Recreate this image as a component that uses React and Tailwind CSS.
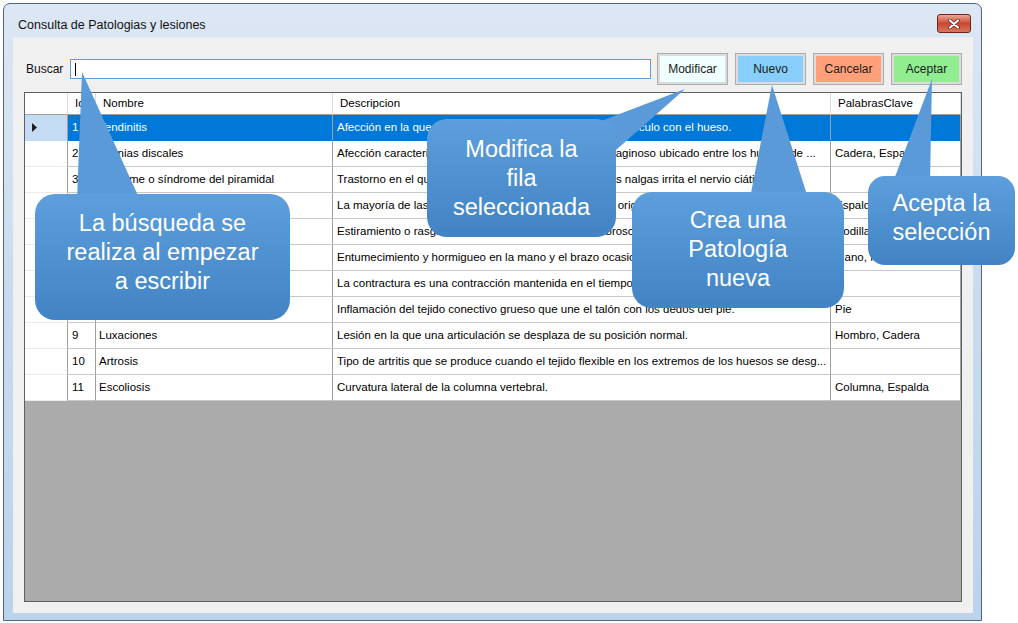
import React from 'react';

const ROWS = [
  { id: 1, name: 'Tendinitis', desc: 'Afección en la que se inflama un tendón, el que une el músculo con el hueso.', kw: '' },
  { id: 2, name: 'Hernias discales', desc: 'Afección caracterizada por la protrusión del disco cartilaginoso ubicado entre los huesos de ...', kw: 'Cadera, Espalda' },
  { id: 3, name: 'Piriforme o síndrome del piramidal', desc: 'Trastorno en el que el músculo piramidal ubicado en las nalgas irrita el nervio ciático.', kw: '' },
  { id: 4, name: 'Lumbalgia', desc: 'La mayoría de las dolencias de espalda baja tienen su origen mecánico.', kw: 'Espalda' },
  { id: 5, name: 'Esguince', desc: 'Estiramiento o rasgadura de un ligamento, el tejido fibroso que une los huesos.', kw: 'Rodilla, Tobillo' },
  { id: 6, name: 'Síndrome del túnel carpiano', desc: 'Entumecimiento y hormigueo en la mano y el brazo ocasionado por un nervio.', kw: 'Mano, Muñeca' },
  { id: 7, name: 'Contractura', desc: 'La contractura es una contracción mantenida en el tiempo de un músculo.', kw: '' },
  { id: 8, name: 'Fascitis plantar', desc: 'Inflamación del tejido conectivo grueso que une el talón con los dedos del pie.', kw: 'Pie' },
  { id: 9, name: 'Luxaciones', desc: 'Lesión en la que una articulación se desplaza de su posición normal.', kw: 'Hombro, Cadera' },
  { id: 10, name: 'Artrosis', desc: 'Tipo de artritis que se produce cuando el tejido flexible en los extremos de los huesos se desg...', kw: '' },
  { id: 11, name: 'Escoliosis', desc: 'Curvatura lateral de la columna vertebral.', kw: 'Columna, Espalda' },
];

function WinButton({ label, fill }) {
  return (
    <div className="w-[71px] h-[32px] border border-[#acacac] bg-[#dcdcdc] p-[2px] flex">
      <div className={`flex-1 flex items-center justify-center text-[12px] text-[#1b1b1b] ${fill}`}>{label}</div>
    </div>
  );
}

function Row({ r, sel }) {
  const cell = sel
    ? 'bg-[#0078d7] text-white border-r border-b border-r-[#a0a0a0] border-b-[#0078d7]'
    : 'bg-white text-black border-r border-b border-r-[#a0a0a0] border-b-[#c8c8c8]';
  return (
    <div className="flex h-[26px] text-[11.5px] leading-none">
      <div className={sel
        ? 'w-[43px] shrink-0 bg-[#c4dcf3] border-r border-b border-r-[#a0a0a0] border-b-[#c4dcf3] flex items-center pl-[7px]'
        : 'w-[43px] shrink-0 bg-white border-r border-b border-r-[#a0a0a0] border-b-[#ececec]'}>
        {sel && (
          <svg width="5" height="9" viewBox="0 0 5 9"><polygon points="0,0 5,4.5 0,9" fill="#1e1e1e" /></svg>
        )}
      </div>
      <div className={`w-[28px] shrink-0 pl-[4px] flex items-center overflow-hidden whitespace-nowrap ${cell}`}>{r.id}</div>
      <div className={`w-[237px] shrink-0 pl-[3px] flex items-center overflow-hidden whitespace-nowrap ${cell}`}>{r.name}</div>
      <div className={`w-[498px] shrink-0 pl-[4px] flex items-center overflow-hidden whitespace-nowrap ${cell}`}>{r.desc}</div>
      <div className={`w-[130px] shrink-0 pl-[4px] flex items-center overflow-hidden whitespace-nowrap ${cell}`}>{r.kw}</div>
    </div>
  );
}

function Callouts() {
  const boxes = [
    { x: 35, y: 194, w: 255, h: 126, r: 20, pb: 'pb-[10px]', tri: '82,72 77,200 140,200', lines: ['La búsqueda se', 'realiza al empezar', 'a escribir'] },
    { x: 427, y: 119, w: 189, h: 118, r: 20, pb: 'pb-[0px]', tri: '685,89 588,126 616,150', lines: ['Modifica la', 'fila', 'seleccionada'] },
    { x: 632, y: 192, w: 212, h: 116, r: 20, pb: 'pb-[2px]', tri: '772,85 750,198 808,198', lines: ['Crea una', 'Patología', 'nueva'] },
    { x: 868, y: 176, w: 147, h: 89, r: 17, pb: 'pb-[6px]', tri: '932,79 893,182 930,182', lines: ['Acepta la', 'selección'] },
  ];
  return (
    <div className="absolute inset-0 pointer-events-none">
      <svg width="1018" height="623" className="absolute left-0 top-0">
        <defs>
          <linearGradient id="cg" x1="0" y1="0" x2="0" y2="1">
            <stop offset="0" stopColor="#5d9edc" />
            <stop offset="1" stopColor="#4283c4" />
          </linearGradient>
        </defs>
        {boxes.map((b, i) => (
          <polygon key={'t' + i} points={b.tri} fill="#5a9ad9" />
        ))}
        {boxes.map((b, i) => (
          <rect key={'r' + i} x={b.x} y={b.y} width={b.w} height={b.h} rx={b.r} fill="url(#cg)" />
        ))}
      </svg>
      {boxes.map((b, i) => (
        <div key={'x' + i} className={`absolute flex flex-col items-center justify-center text-white text-[23.5px] leading-[29px] text-center whitespace-nowrap ${b.pb}`}
          style={{ left: b.x, top: b.y, width: b.w, height: b.h }}>
          {b.lines.map((l) => <div key={l}>{l}</div>)}
        </div>
      ))}
    </div>
  );
}

export default function App() {
  return (
    <div className="relative w-[1018px] h-[623px] bg-white overflow-hidden font-['Liberation_Sans',Arial,sans-serif]">
      <div className="pl-[3px] pt-[3px]">
        <div className="w-[979px] h-[618px] border border-[#4f6681] rounded-t-[7px] bg-gradient-to-b from-[#dde7f4] via-[#c9daee] to-[#bcd3ec] flex flex-col">
          {/* title bar */}
          <div className="h-[33px] flex items-start justify-between pl-[14px] pr-[10px]">
            <div className="mt-[14px] text-[12.5px] leading-[14px] text-[#111]">Consulta de Patologias y lesiones</div>
            <div className="mt-[10px] w-[34px] h-[19px] rounded-[3px] border border-[#6b2519] bg-gradient-to-b from-[#eaa897] via-[#c9462f] to-[#d7765e] flex items-center justify-center">
              <svg width="12" height="10" viewBox="0 0 12 10">
                <path d="M2 1.5 L10 8.5 M10 1.5 L2 8.5" stroke="#5a1c12" strokeWidth="3.6" strokeLinecap="round" />
                <path d="M2 1.5 L10 8.5 M10 1.5 L2 8.5" stroke="#ffffff" strokeWidth="2.2" strokeLinecap="round" />
              </svg>
            </div>
          </div>
          {/* client area */}
          <div className="flex-1 flex pl-[9px] pr-[8px] pb-[7px]">
            <div className="w-[960px] bg-[#f0f0f0] border-t border-[#e8eef6] flex flex-col pl-[11px] pr-[11px] pt-[15px] pb-[11px]">
              <div className="h-[32px] flex items-center pl-[2px]">
                <div className="w-[44px] text-[12px] text-[#111]">Buscar</div>
                <div className="flex-1 h-[20px] bg-white border border-[#5b9de3] flex items-center pl-[4px]">
                  <div className="w-[1px] h-[13px] bg-black" />
                </div>
                <div className="ml-[6px] flex gap-[7px]">
                  <WinButton label="Modificar" fill="bg-[#f0ffff]" />
                  <WinButton label="Nuevo" fill="bg-[#87cefa]" />
                  <WinButton label="Cancelar" fill="bg-[#ffa07a]" />
                  <WinButton label="Aceptar" fill="bg-[#90ee90]" />
                </div>
              </div>
              <div className="mt-[7px] flex-1 w-[938px] border border-[#5f5f5f] bg-[#ababab] flex flex-col">
                <div className="flex h-[22px] bg-white text-[11.5px] text-black">
                  <div className="w-[43px] shrink-0 border-r border-b border-r-[#dcdcdc] border-b-[#a0a0a0]" />
                  <div className="w-[28px] shrink-0 pl-[7px] flex items-center border-r border-b border-r-[#dcdcdc] border-b-[#a0a0a0]">Id</div>
                  <div className="w-[237px] shrink-0 pl-[7px] flex items-center border-r border-b border-r-[#dcdcdc] border-b-[#a0a0a0]">Nombre</div>
                  <div className="w-[498px] shrink-0 pl-[7px] flex items-center border-r border-b border-r-[#dcdcdc] border-b-[#a0a0a0]">Descripcion</div>
                  <div className="w-[130px] shrink-0 pl-[7px] flex items-center border-r border-b border-r-[#dcdcdc] border-b-[#a0a0a0]">PalabrasClave</div>
                </div>
                {ROWS.map((r, i) => <Row key={r.id} r={r} sel={i === 0} />)}
              </div>
            </div>
          </div>
        </div>
      </div>
      <Callouts />
    </div>
  );
}
